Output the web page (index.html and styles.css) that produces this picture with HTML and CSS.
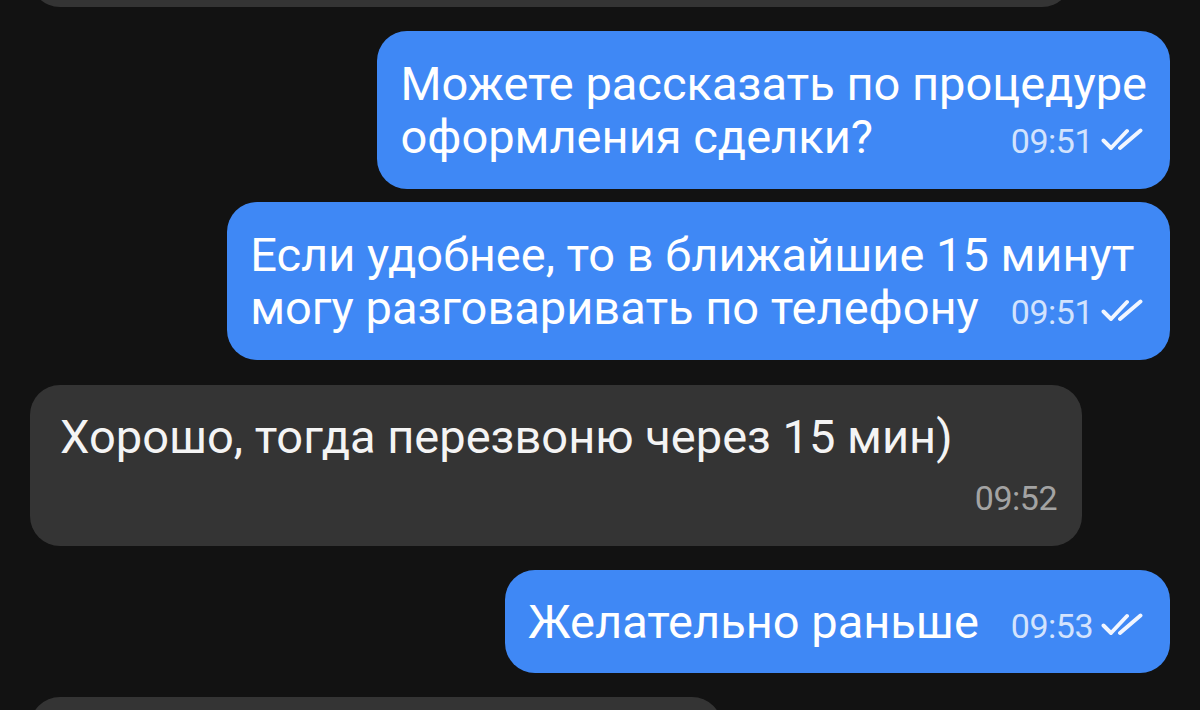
FILE: index.html
```html
<!DOCTYPE html>
<html lang="ru">
<head>
<meta charset="utf-8">
<title>Чат</title>
<link rel="stylesheet" href="styles.css">
</head>
<body>
<div class="chat">
  <div class="msg in prev"></div>

  <div class="msg out">
    <div class="row">Можете рассказать по процедуре</div>
    <div class="row last">
      <span>оформления сделки?</span>
      <span class="meta"><span class="time">09:51</span><svg class="check" viewBox="0 0 42 23"><path d="M2.5 12.5 L10 20 L26 3"/><path d="M19 20 L39.5 2.5"/></svg></span>
    </div>
  </div>

  <div class="msg out tight">
    <div class="row">Если удобнее, то в ближайшие 15 минут</div>
    <div class="row last">
      <span>могу разговаривать по телефону</span>
      <span class="meta"><span class="time">09:51</span><svg class="check" viewBox="0 0 42 23"><path d="M2.5 12.5 L10 20 L26 3"/><path d="M19 20 L39.5 2.5"/></svg></span>
    </div>
  </div>

  <div class="msg in wide">
    <div class="row">Хорошо, тогда перезвоню через 15 мин)</div>
    <div class="stamp"><span class="time">09:52</span></div>
  </div>

  <div class="msg out single">
    <div class="row last">
      <span>Желательно раньше</span>
      <span class="meta"><span class="time">09:53</span><svg class="check" viewBox="0 0 42 23"><path d="M2.5 12.5 L10 20 L26 3"/><path d="M19 20 L39.5 2.5"/></svg></span>
    </div>
  </div>

  <div class="msg in next"></div>
</div>
</body>
</html>
```

FILE: styles.css
```css
html, body {
  margin: 0;
  padding: 0;
  background: #121212;
  height: 100%;
  overflow: hidden;
}

body {
  font-family: Roboto, "Noto Sans", "Liberation Sans", sans-serif;
  color: #ffffff;
}

.chat {
  display: flex;
  flex-direction: column;
  gap: 24px;
  padding: 0 30px;
  margin-top: -99px;
}

.msg {
  box-sizing: border-box;
  border-radius: 30px;
  font-size: 47px;
  line-height: 53px;
  padding: 26px 23px 26px 23px;
  white-space: nowrap;
}

.msg.out {
  align-self: flex-end;
  background: #3f88f5;
}

.msg.out.tight {
  margin-top: -11px;
}

.msg.out.single {
  padding-top: 25px;
  padding-bottom: 25px;
}

.msg.in {
  align-self: flex-start;
  background: #343434;
  color: #f4f4f4;
  padding: 25px 25px 28px 30px;
}

.msg.prev {
  width: 1042px;
  height: 106px;
}

.msg.next {
  width: 692px;
  height: 106px;
}

.msg.wide {
  width: 1052px;
  margin-top: 1px;
}

.row {
  height: 53px;
}

.row.last {
  display: flex;
  align-items: baseline;
  justify-content: space-between;
}

.meta {
  display: flex;
  align-items: baseline;
  margin-left: 32px;
  margin-right: 4px;
}

.time {
  font-size: 34px;
  letter-spacing: -0.5px;
  color: #d3e3fd;
}

.check {
  width: 42px;
  height: 23px;
  margin-left: 8px;
  fill: none;
  stroke: #f2f6ff;
  stroke-width: 3.9;
  stroke-linecap: round;
  stroke-linejoin: round;
  align-self: center;
  position: relative;
  top: -2px;
}

.stamp {
  display: flex;
  justify-content: flex-end;
  margin-top: 15px;
  height: 40px;
  line-height: 40px;
}

.stamp .time {
  color: #a3a3a3;
}
```
